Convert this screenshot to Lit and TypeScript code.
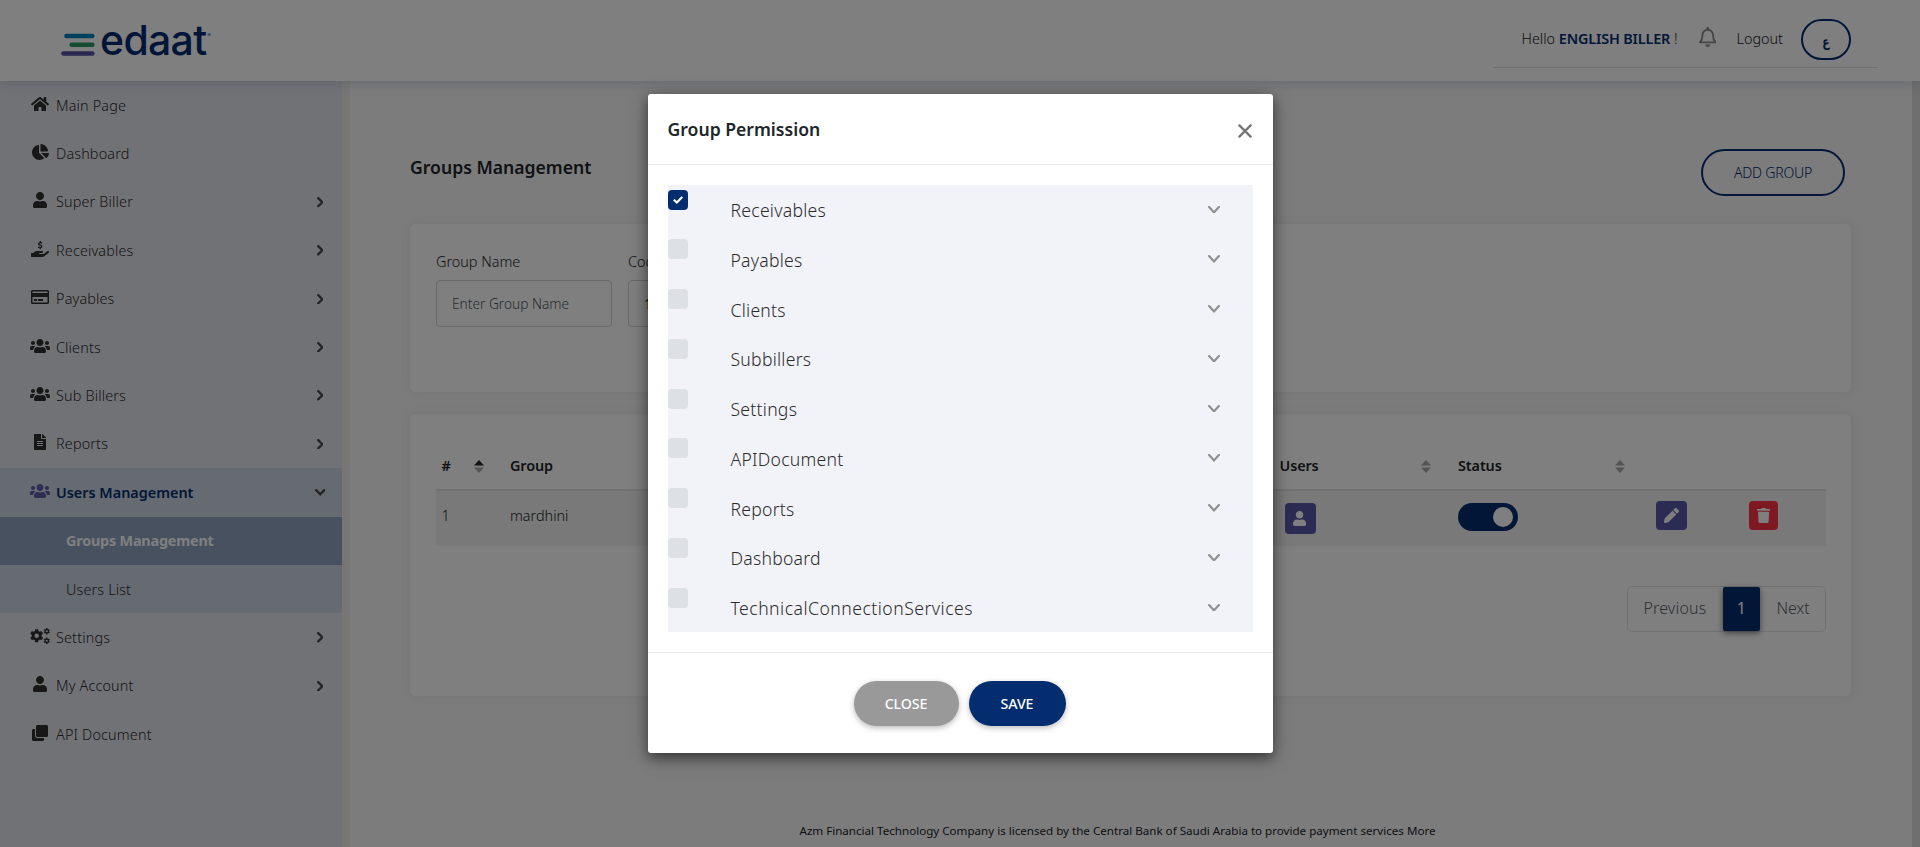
import { LitElement, html, svg, css } from "lit";
import { customElement, property } from "lit/decorators.js";
import { classMap } from "lit/directives/class-map.js";

const gear = (cx: number, cy: number, r: number, teeth: number, tooth: number, hole: number) => {
  const p: string[] = [];
  const step = (Math.PI * 2) / teeth;
  for (let i = 0; i < teeth; i++) {
    const a = i * step + step / 2;
    const pts: [number, number][] = [[-0.32, r], [-0.22, r + tooth], [0.22, r + tooth], [0.32, r]];
    for (const [k, rad] of pts) {
      p.push(`${(cx + Math.cos(a + k * step) * rad).toFixed(1)} ${(cy + Math.sin(a + k * step) * rad).toFixed(1)}`);
    }
  }
  return `M${p.join("L")}ZM${cx - hole} ${cy}a${hole} ${hole} 0 1 0 ${hole * 2} 0a${hole} ${hole} 0 1 0 ${-hole * 2} 0Z`;
};

const ICONS: Record<string, [number, number, string]> = {
  home: [576, 512, "M280.37 148.26L96 300.11V464a16 16 0 0 0 16 16l112.06-.29a16 16 0 0 0 15.92-16V368a16 16 0 0 1 16-16h64a16 16 0 0 1 16 16v95.64a16 16 0 0 0 16 16.05L464 480a16 16 0 0 0 16-16V300L295.67 148.26a12.19 12.19 0 0 0-15.3 0zM571.6 251.47L488 182.56V44.05a12 12 0 0 0-12-12h-56a12 12 0 0 0-12 12v72.61L318.47 43a48 48 0 0 0-61 0L4.34 251.47a12 12 0 0 0-1.6 16.9l25.5 31A12 12 0 0 0 45.15 301l235.22-193.74a12.19 12.19 0 0 1 15.3 0L530.9 301a12 12 0 0 0 16.9-1.6l25.5-31a12 12 0 0 0-1.7-16.93z"],
  pie: [544, 512, "M527.79 288H290.5l158.03 158.03c6.04 6.04 15.98 6.53 22.19.68 38.7-36.46 65.32-85.61 73.13-140.86 1.34-9.46-6.51-17.85-16.06-17.85zm-15.83-64.8C503.72 103.74 408.26 8.28 288.8.04 279.68-.59 272 7.1 272 16.24V240h223.77c9.14 0 16.82-7.68 16.19-16.8zM224 288V50.71c0-9.55-8.39-17.4-17.84-16.06C86.99 51.49-4.1 155.6.14 280.37 4.5 408.51 114.83 513.59 243.03 511.98c50.4-.63 96.97-16.87 135.26-44.03 7.9-5.6 8.42-17.23 1.57-24.08L224 288z"],
  user: [448, 512, "M224 256c70.7 0 128-57.3 128-128S294.7 0 224 0 96 57.3 96 128s57.3 128 128 128zm89.6 32h-16.7c-22.2 10.2-46.9 16-72.9 16s-50.6-5.8-72.9-16h-16.7C60.2 288 0 348.2 0 422.4V464c0 26.5 21.5 48 48 48h352c26.5 0 48-21.5 48-48v-41.6c0-74.2-60.2-134.4-134.4-134.4z"],
  hand: [576, 512, "M565.3 328.1c-11.8-10.7-30.2-10-42.6 0L430.3 402c-11.3 9.1-25.4 14-40 14H272c-8.8 0-16-7.2-16-16s7.2-16 16-16h78.3c15.9 0 30.7-10.9 33.3-26.6 3.3-20-12.1-37.4-31.6-37.4H192c-27 0-53.1 9.3-74.1 26.3L71.4 384H16c-8.8 0-16 7.2-16 16v96c0 8.8 7.2 16 16 16h356.8c14.5 0 28.6-4.9 40-14L564 377c15.2-12.1 16.4-35.3 1.3-48.9zM282 0h36v34c22 3 38 14 46 22l-22 34c-16-12-32-18-50-18-16 0-24 6-24 14 0 12 14 16 36 23 34 10 62 26 62 62 0 32-20 54-52 60v33h-36v-32c-26-3-46-14-58-25l24-36c18 14 36 22 56 22 14 0 24-6 24-16 0-13-16-18-38-25-30-9-60-24-60-60 0-30 22-52 56-58z"],
  card: [576, 512, "M527.9 32H48.1C21.5 32 0 53.5 0 80v352c0 26.5 21.5 48 48.1 48h479.8c26.6 0 48.1-21.5 48.1-48V80c0-26.5-21.5-48-48.1-48zM54.1 80h467.8c3.3 0 6 2.7 6 6v42H48.1V86c0-3.3 2.7-6 6-6zm467.8 352H54.1c-3.3 0-6-2.7-6-6V256h479.8v170c0 3.3-2.7 6-6 6zM192 332v40c0 6.6-5.4 12-12 12h-72c-6.6 0-12-5.4-12-12v-40c0-6.6 5.4-12 12-12h72c6.6 0 12 5.4 12 12zm192 0v40c0 6.6-5.4 12-12 12H236c-6.6 0-12-5.4-12-12v-40c0-6.6 5.4-12 12-12h136c6.6 0 12 5.4 12 12z"],
  users: [640, 512, "M96 224c35.3 0 64-28.7 64-64s-28.7-64-64-64-64 28.7-64 64 28.7 64 64 64zm448 0c35.3 0 64-28.7 64-64s-28.7-64-64-64-64 28.7-64 64 28.7 64 64 64zm32 32h-64c-17.6 0-33.5 7.1-45.1 18.6 40.3 22.1 68.9 62 75.1 109.4h66c17.7 0 32-14.3 32-32v-32c0-35.3-28.7-64-64-64zm-256 0c61.9 0 112-50.1 112-112S381.9 32 320 32 208 82.1 208 144s50.1 112 112 112zm76.8 32h-8.3c-20.8 10-43.9 16-68.5 16s-47.6-6-68.5-16h-8.3C179.6 288 128 339.6 128 403.2V432c0 26.5 21.5 48 48 48h288c26.5 0 48-21.5 48-48v-28.8c0-63.6-51.6-115.2-115.2-115.2zm-223.7-13.4C161.5 263.1 145.6 256 128 256H64c-35.3 0-64 28.7-64 64v32c0 17.7 14.3 32 32 32h65.9c6.3-47.4 34.9-87.3 75.2-109.4z"],
  file: [384, 512, "M224 136V0H24C10.7 0 0 10.7 0 24v464c0 13.3 10.7 24 24 24h336c13.3 0 24-10.7 24-24V160H248c-13.2 0-24-10.8-24-24zm64 236c0 6.6-5.4 12-12 12H108c-6.6 0-12-5.4-12-12v-8c0-6.6 5.4-12 12-12h168c6.6 0 12 5.4 12 12v8zm0-64c0 6.6-5.4 12-12 12H108c-6.6 0-12-5.4-12-12v-8c0-6.6 5.4-12 12-12h168c6.6 0 12 5.4 12 12v8zm0-72v8c0 6.6-5.4 12-12 12H108c-6.6 0-12-5.4-12-12v-8c0-6.6 5.4-12 12-12h168c6.6 0 12 5.4 12 12zm96-114.1v6.1H256V0h6.1c6.4 0 12.5 2.5 17 7l97.9 98c4.5 4.5 7 10.6 7 16.9z"],
  cogs: [640, 512, gear(214, 246, 162, 6, 52, 74) + gear(536, 104, 76, 6, 28, 34) + gear(536, 408, 76, 6, 28, 34)],
  clone: [512, 512, "M464 0c26.51 0 48 21.49 48 48v288c0 26.51-21.49 48-48 48H176c-26.51 0-48-21.49-48-48V48c0-26.51 21.49-48 48-48h288M176 416c-44.112 0-80-35.888-80-80V128H48c-26.51 0-48 21.49-48 48v288c0 26.51 21.49 48 48 48h288c26.51 0 48-21.49 48-48v-48H176z"],
  bell: [448, 512, "M439.39 362.29c-19.32-20.76-55.47-51.99-55.47-154.29 0-77.7-54.48-139.9-127.94-155.16V32c0-17.67-14.32-32-31.98-32s-31.98 14.33-31.98 32v20.84C118.56 68.1 64.08 130.3 64.08 208c0 102.3-36.15 133.53-55.47 154.29-6 6.45-8.66 14.16-8.61 21.71.11 16.4 12.98 32 32.1 32h383.8c19.12 0 32-15.6 32.1-32 .05-7.55-2.61-15.27-8.61-21.71zM67.53 368c21.22-27.97 44.42-74.33 44.53-159.42 0-.2-.06-.38-.06-.58 0-61.86 50.14-112 112-112s112 50.14 112 112c0 .2-.06.38-.06.58.11 85.1 23.31 131.46 44.53 159.42H67.53zM224 512c35.32 0 63.97-28.65 63.97-64H160.03c0 35.35 28.65 64 63.97 64z"],
  trash: [448, 512, "M432 32H312l-9.4-18.7A24 24 0 0 0 281.1 0H166.8a23.72 23.72 0 0 0-21.4 13.3L136 32H16A16 16 0 0 0 0 48v32a16 16 0 0 0 16 16h416a16 16 0 0 0 16-16V48a16 16 0 0 0-16-16zM53.2 467a48 48 0 0 0 47.9 45h245.8a48 48 0 0 0 47.9-45L416 128H32z"],
  pencil: [512, 512, "M497.9 142.1l-46.1 46.1c-4.7 4.7-12.3 4.7-17 0l-111-111c-4.7-4.7-4.7-12.3 0-17l46.1-46.1c18.7-18.7 49.1-18.7 67.9 0l60.1 60.1c18.8 18.7 18.8 49.1 0 67.9zM284.2 99.8L21.6 362.4.4 483.9c-2.9 16.4 11.4 30.6 27.8 27.8l121.5-21.3 262.6-262.6c4.7-4.7 4.7-12.3 0-17l-111-111c-4.8-4.7-12.4-4.7-17.1 0z"],
};

const icon = (name: string, size: number) => {
  const [w, h, d] = ICONS[name];
  return html`<svg width=${(size * w) / h} height=${size} viewBox="0 0 ${w} ${h}" fill="currentColor" fill-rule=${name === "cogs" ? "evenodd" : "nonzero"}>${svg`<path d=${d}></path>`}</svg>`;
};

const chevron = (dir: "right" | "down", w: number, h: number, stroke: number) => {
  const m = stroke / 2;
  const pts = dir === "right"
    ? `${m},${m} ${w - m},${h / 2} ${m},${h - m}`
    : `${m},${m} ${w / 2},${h - m} ${w - m},${m}`;
  return html`<svg width=${w} height=${h} viewBox="0 0 ${w} ${h}" fill="none" stroke="currentColor" stroke-width=${stroke} stroke-linecap="round">${svg`<polyline points=${pts}></polyline>`}</svg>`;
};

const base = css`
  * { box-sizing: border-box; }
  svg { display: block; flex: none; }
`;

@customElement("top-bar")
class TopBar extends LitElement {
  static styles = [base, css`
    :host { display: flex; justify-content: space-between; height: 81px; background: #fff; box-shadow: 0 2px 12px rgba(70, 90, 130, 0.22); position: relative; z-index: 1; }
    .logo { display: flex; padding: 18px 0 0 61px; }
    .bars { margin: 15px 5px 0 0; }
    .word { font: 500 41px/45px Inter, sans-serif; letter-spacing: -0.7px; color: #002b70; }
    .reg { font: 600 5px/6px Inter, sans-serif; color: #2b5795; margin: 14px 0 0 1px; }
    .user { display: flex; align-items: flex-start; height: 68px; width: 385px; margin-right: 42px; padding: 19px 27px 0 28.5px; border-bottom: 1px solid #dee2e6; font-size: 14.4px; font-weight: 300; color: #222; }
    .hello, .out { line-height: 39px; white-space: pre; }
    .hello b { font-weight: 600; color: #042d70; letter-spacing: -0.15px; }
    .bell { color: #8c8c8c; margin: 8px 20.5px 0 auto; }
    .lang { margin-left: 18px; width: 50px; height: 41px; border: 2px solid #042d70; border-radius: 20.5px; color: #042d70; font: 700 14px/43px "DejaVu Sans", sans-serif; text-align: center; }
    .lang i { display: inline-block; font-style: normal; transform: scaleX(0.75); }
  `];
  render() {
    return html`
      <div class="logo">
        <svg class="bars" width="34" height="24" viewBox="0 0 34 24" stroke-width="4.6" stroke-linecap="round">
          <path d="M5.5 3H31.3" stroke="#0080bd"></path>
          <path d="M10.7 11.8H31.3" stroke="#289b60"></path>
          <path d="M2.5 20.5H31.3" stroke="#5552a5"></path>
        </svg>
        <span class="word">edaat</span><span class="reg">®</span>
      </div>
      <div class="user">
        <span class="hello">Hello <b>ENGLISH BILLER</b> !</span>
        <span class="bell">${icon("bell", 20)}</span>
        <span class="out">Logout</span>
        <span class="lang"><i>ع</i></span>
      </div>`;
  }
}

const NAV = [
  { label: "Main Page", icon: "home" },
  { label: "Dashboard", icon: "pie" },
  { label: "Super Biller", icon: "user", more: true },
  { label: "Receivables", icon: "hand", more: true },
  { label: "Payables", icon: "card", more: true },
  { label: "Clients", icon: "users", more: true },
  { label: "Sub Billers", icon: "users", more: true },
  { label: "Reports", icon: "file", more: true },
  { label: "Users Management", icon: "users", open: true },
  { label: "Groups Management", sub: true, current: true },
  { label: "Users List", sub: true },
  { label: "Settings", icon: "cogs", more: true },
  { label: "My Account", icon: "user", more: true },
  { label: "API Document", icon: "clone" },
] as { label: string; icon?: string; more?: boolean; open?: boolean; sub?: boolean; current?: boolean }[];

@customElement("side-nav")
class SideNav extends LitElement {
  static styles = [base, css`
    :host { display: block; width: 342px; background: #e3e5ed; }
    .item { display: flex; align-items: center; height: 48.4px; padding: 0 17px 0 28px; font-size: 14.4px; font-weight: 300; letter-spacing: 0.15px; color: #2b2b2b; }
    .icon { width: 24px; margin: 0 4px 3px 0; display: flex; justify-content: center; color: #2e2e2e; }
    .label { flex: 1; }
    .arrow { color: #4a4a4f; width: 10px; display: flex; justify-content: center; }
    .open, .sub { background: #ccd5e2; }
    .open { font-weight: 600; color: #042d70; letter-spacing: 0; }
    .open .icon { color: #5f5aa8; }
    .sub { padding-left: 66px; }
    .current { background: #90a3bf; color: #fff; font-weight: 700; letter-spacing: -0.2px; }
  `];
  render() {
    return html`${NAV.map((n) => html`
      <div class=${classMap({ item: true, open: !!n.open, sub: !!n.sub, current: !!n.current })}>
        ${n.icon ? html`<span class="icon">${icon(n.icon, 16)}</span>` : ""}
        <span class="label">${n.label}</span>
        ${n.more ? html`<span class="arrow">${chevron("right", 6.5, 10.5, 2.4)}</span>` : ""}
        ${n.open ? html`<span class="arrow">${chevron("down", 10.5, 6.5, 2.4)}</span>` : ""}
      </div>`)}`;
  }
}

@customElement("sort-mark")
class SortMark extends LitElement {
  @property({ type: Boolean }) asc = false;
  static styles = [base, css`:host { display: block; }`];
  render() {
    return html`<svg width="10" height="13" viewBox="0 0 10 13">
      <path d="M5 0L10 5.5H0Z" fill=${this.asc ? "#212529" : "#a9a9a9"}></path>
      <path d="M5 13L10 7.5H0Z" fill="#a9a9a9"></path>
    </svg>`;
  }
}

@customElement("groups-page")
class GroupsPage extends LitElement {
  static styles = [base, css`
    :host { display: flex; flex-direction: column; flex: 1; background: #f8f8f9; border-left: 8px solid #efedeb; border-right: 8px solid #dedede; padding: 0 61px 0 60px; color: #212529; }
    .head { display: flex; justify-content: space-between; align-items: flex-start; height: 143px; padding: 68px 6px 0 0; }
    h1 { margin: 0; font-size: 17.6px; font-weight: 600; line-height: 37px; }
    .add { height: 47px; width: 144px; border: 2px solid #042d70; border-radius: 24px; color: #042d70; background: none; font: 350 14.1px "Noto Sans", sans-serif; letter-spacing: -0.25px; padding: 0; }
    .card { background: #fff; border-radius: 5px; box-shadow: 0 0 9px rgba(80, 90, 110, 0.1); padding: 0 25px 0 26px; }
    .filter { height: 168px; display: flex; gap: 16px; padding-top: 25px; font-size: 14.4px; font-weight: 350; }
    .field { width: 176px; }
    .field label { display: block; line-height: 26px; }
    .box { margin-top: 5px; height: 47px; border: 1px solid #ced4da; border-radius: 4px; line-height: 46px; padding-left: 15px; font-size: 13.7px; font-weight: 300; color: #4f5861; }
    .filled { color: #212529; font-weight: 400; }
    .list { margin-top: 22px; height: 282px; }
    .row { display: grid; grid-template-columns: 68.5px 769.5px 178.5px 198px 92px 1fr; padding-left: 5.5px; }
    .th { height: 77px; padding-top: 32px; border-bottom: 2px solid #dee2e6; font-size: 14.4px; font-weight: 600; line-height: 40px; letter-spacing: -0.1px; }
    .th div { display: flex; justify-content: space-between; align-items: center; height: 40px; }
    .a { padding-right: 26px; } .b { padding-right: 620px; } .c { padding-right: 27px; } .d { padding-right: 31px; }
    .td { height: 55px; background: #f2f2f2; font-size: 14.4px; font-weight: 350; line-height: 49px; }
    .btn { display: flex; align-items: center; justify-content: center; width: 31px; height: 31px; border-radius: 4px; background: #5756a8; color: #fff; }
    .users { margin: 12px 0 0 5px; }
    .edit { height: 29px; margin-top: 10px; }
    .del { height: 29px; width: 29px; margin: 10px 0 0 1px; background: #fd3347; }
    .toggle { width: 60px; height: 28px; border-radius: 14px; background: #042d70; margin: 12px 0 0 -0.5px; display: flex; justify-content: flex-end; padding: 4px 5px; }
    .toggle i { width: 20px; height: 20px; border-radius: 50%; background: #fff; }
    .pager { display: flex; width: 199px; height: 46px; margin: 40px 0 0 auto; border: 1px solid #dee2e6; border-radius: 5px; font-size: 16px; font-weight: 300; line-height: 43px; color: #5c646c; justify-content: space-between; }
    .pager span { padding: 0 15.5px; letter-spacing: 0.15px; }
    .pager .next { letter-spacing: -0.2px; }
    .pager .on { width: 37px; padding: 0; text-align: center; background: #042d70; color: #fff; font-weight: 400; border-radius: 2px; box-shadow: 0 2px 6px rgba(0, 0, 0, 0.5); }
    footer { margin-top: 121px; padding-right: 26px; font-size: 11.6px; line-height: 28px; text-align: center; white-space: nowrap; }
  `];
  render() {
    return html`
      <div class="head"><h1>Groups Management</h1><button class="add">ADD GROUP</button></div>
      <section class="card filter">
        <div class="field"><label>Group Name</label><div class="box">Enter Group Name</div></div>
        <div class="field"><label>Code</label><div class="box filled">1</div></div>
      </section>
      <section class="card list">
        <div class="row th">
          <div class="a">#<sort-mark asc></sort-mark></div>
          <div class="b">Group</div>
          <div class="c">Users<sort-mark></sort-mark></div>
          <div class="d">Status<sort-mark></sort-mark></div>
        </div>
        <div class="row td">
          <div>1</div>
          <div>mardhini</div>
          <div><div class="btn users">${icon("user", 15)}</div></div>
          <div><div class="toggle"><i></i></div></div>
          <div><div class="btn edit">${icon("pencil", 15)}</div></div>
          <div><div class="btn del">${icon("trash", 15)}</div></div>
        </div>
        <div class="pager"><span>Previous</span><span class="on">1</span><span class="next">Next</span></div>
      </section>
      <footer>Azm Financial Technology Company is licensed by the Central Bank of Saudi Arabia to provide payment services More</footer>`;
  }
}

const PERMISSIONS = ["Receivables", "Payables", "Clients", "Subbillers", "Settings", "APIDocument", "Reports", "Dashboard", "TechnicalConnectionServices"];

@customElement("permission-dialog")
class PermissionDialog extends LitElement {
  static styles = [base, css`
    :host { display: block; width: 625px; height: 659px; background: #fff; border-radius: 3px; box-shadow: 0 5px 11px rgba(0, 0, 0, 0.36), 0 4px 20px rgba(0, 0, 0, 0.3); color: #212529; }
    header { display: flex; justify-content: space-between; align-items: center; height: 71px; padding: 0 21px 0 19.5px; border-bottom: 1px solid #e9ecef; }
    h2 { margin: 0; font-size: 17.6px; font-weight: 600; padding-bottom: 1px; }
    header svg { margin-top: 4px; }
    .list { margin: 20px 20px 20px; width: 585px; height: 447px; background: #f2f3f8; }
    .item { display: flex; align-items: flex-start; height: 49.75px; padding-right: 33px; }
    .check { width: 20px; height: 20px; border-radius: 4px; background: #dde0e5; margin: 5px 42.5px 0 0; display: flex; align-items: center; justify-content: center; }
    .item:not(:first-child) .check { margin-top: 4.5px; }
    .item .on { background: #042d70; }
    .name { flex: 1; font-size: 17.6px; font-weight: 300; line-height: 50.75px; letter-spacing: 0.25px; color: #2b2b2b; }
    .long { letter-spacing: 0.48px; }
    .arrow { color: #8f8f8f; margin-top: 20.5px; }
    footer { display: flex; justify-content: center; gap: 10px; padding: 28px 2px 0 0; border-top: 1px solid #e9ecef; }
    button { height: 45px; border: 0; border-radius: 23px; color: #fff; font: 500 14.2px "Noto Sans", sans-serif; letter-spacing: -0.1px; padding: 0; background: #042d70; box-shadow: 0 2px 5px rgba(0, 0, 0, 0.18), 0 2px 8px rgba(0, 0, 0, 0.1); width: 97px; }
    .close { width: 105px; background: #999; }
  `];
  render() {
    return html`
      <header>
        <h2>Group Permission</h2>
        <svg width="14" height="14" viewBox="0 0 14 14" fill="none" stroke="#777" stroke-width="2.4" stroke-linecap="round"><path d="M1.4 1.4L12.6 12.6M12.6 1.4L1.4 12.6"></path></svg>
      </header>
      <div class="list">
        ${PERMISSIONS.map((p, i) => html`
          <div class="item">
            <span class=${classMap({ check: true, on: i === 0 })}>
              ${i === 0 ? html`<svg width="10" height="8" viewBox="0 0 10 8" fill="none" stroke="#fff" stroke-width="2.2"><path d="M0.8 3.8L3.8 6.5L9.3 1"></path></svg>` : ""}
            </span>
            <span class=${classMap({ name: true, long: p.length > 20 })}>${p}</span>
            <span class="arrow">${chevron("down", 12, 7.5, 2.2)}</span>
          </div>`)}
      </div>
      <footer><button class="close">CLOSE</button><button>SAVE</button></footer>`;
  }
}

@customElement("app-root")
class AppRoot extends LitElement {
  static styles = [base, css`
    :host { display: flex; flex-direction: column; height: 847px; overflow: hidden; font-family: "Noto Sans", sans-serif; position: relative; }
    .main { display: flex; flex: 1; min-height: 0; }
    .backdrop { position: absolute; inset: 0; z-index: 2; background: rgba(0, 0, 0, 0.5); display: flex; justify-content: center; align-items: flex-start; padding: 94px 0 0 1px; }
  `];
  render() {
    return html`
      <top-bar></top-bar>
      <div class="main"><side-nav></side-nav><groups-page></groups-page></div>
      <div class="backdrop"><permission-dialog></permission-dialog></div>`;
  }
}
